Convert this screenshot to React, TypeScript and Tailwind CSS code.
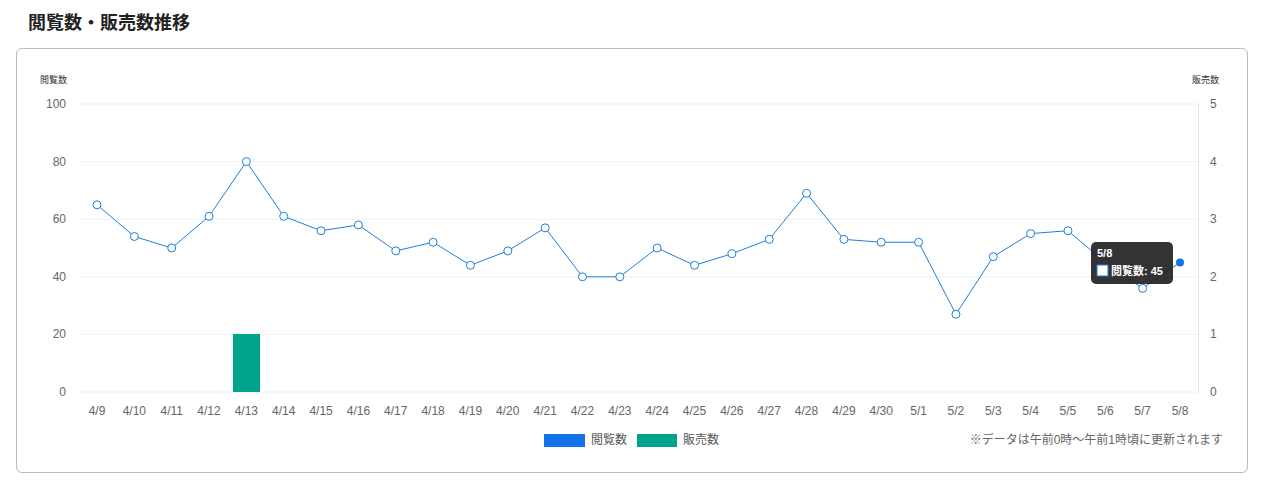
const vals = [65,54,50,61,80,61,56,58,49,52,44,49,57,40,40,50,44,48,53,69,53,52,52,27,47,55,56,45,36,45];
const labels = ["4/9","4/10","4/11","4/12","4/13","4/14","4/15","4/16","4/17","4/18","4/19","4/20","4/21","4/22","4/23","4/24","4/25","4/26","4/27","4/28","4/29","4/30","5/1","5/2","5/3","5/4","5/5","5/6","5/7","5/8"];
const X = (i: number) => 97 + i * (1083 / 29);
const Y = (v: number) => 392 - v * 2.88;

export default function App() {
  const pts = vals.map((v, i) => `${X(i)},${Y(v)}`).join(" ");
  const font = { fontFamily: '"Liberation Sans", "Noto Sans CJK JP", sans-serif' };
  return (
    <div className="w-[1268px] h-[484px] bg-white" style={font}>
      <h2 className="pl-[28px] pt-[8px] h-[48px] text-[18px] font-bold text-[#222]" style={{ fontFamily: '"Noto Sans CJK JP", sans-serif' }}>閲覧数・販売数推移</h2>
      <div className="mx-[16px] w-[1232px] h-[425px] border border-[#b4bcc2] rounded-[6px] overflow-hidden">
        <svg width="1230" height="380" viewBox="17 49 1230 380" className="block">
          <text x="40" y="83" fontSize="9" fill="#333">閲覧数</text>
          <text x="1192" y="83" fontSize="9" fill="#333">販売数</text>
          {[0, 20, 40, 60, 80, 100].map((v) => (
            <g key={v}>
              <line x1="79" x2="1198" y1={Y(v)} y2={Y(v)} stroke="#eef0f2" strokeWidth="1" />
              <text x="66" y={Y(v) + 4} fontSize="12" fill="#666" textAnchor="end">{v}</text>
              <text x="1210" y={Y(v) + 4} fontSize="12" fill="#666">{v / 20}</text>
            </g>
          ))}
          <line x1="1198.5" x2="1198.5" y1="104" y2="392" stroke="#e6e8ea" />
          <rect x="233" y="334" width="27" height="58" fill="#00a38c" />
          <polyline points={pts} fill="none" stroke="#1e7fd9" strokeWidth="1" />
          {vals.map((v, i) =>
            i === 29 ? (
              <circle key={i} cx={X(i)} cy={Y(v)} r="4" fill="#1473e6" />
            ) : (
              <circle key={i} cx={X(i)} cy={Y(v)} r="4" fill="#fff" stroke="#1e7fd9" strokeWidth="1" />
            )
          )}
          {labels.map((l, i) => (
            <text key={l} x={X(i)} y="415" fontSize="12" fill="#666" textAnchor="middle">{l}</text>
          ))}
          <rect x="1091" y="242" width="82" height="42" rx="5" fill="#222" fillOpacity="0.92" />
          <text x="1097" y="257" fontSize="11" fontWeight="bold" fill="#fff">5/8</text>
          <rect x="1097" y="265" width="11" height="11" fill="#fff" stroke="#1e7fd9" />
          <text x="1111" y="275" fontSize="11" fontWeight="bold" fill="#fff">閲覧数: 45</text>
        </svg>
        <div className="flex items-center h-[22px] text-[12px] text-[#555]">
          <div className="ml-[527px] w-[41px] h-[13px] bg-[#1473e6]" />
          <span className="ml-[6px]">閲覧数</span>
          <div className="ml-[10px] w-[40px] h-[13px] bg-[#00a38c]" />
          <span className="ml-[6px]">販売数</span>
          <span className="ml-auto mr-[24px] text-[#666]">※データは午前0時～午前1時頃に更新されます</span>
        </div>
      </div>
    </div>
  );
}
